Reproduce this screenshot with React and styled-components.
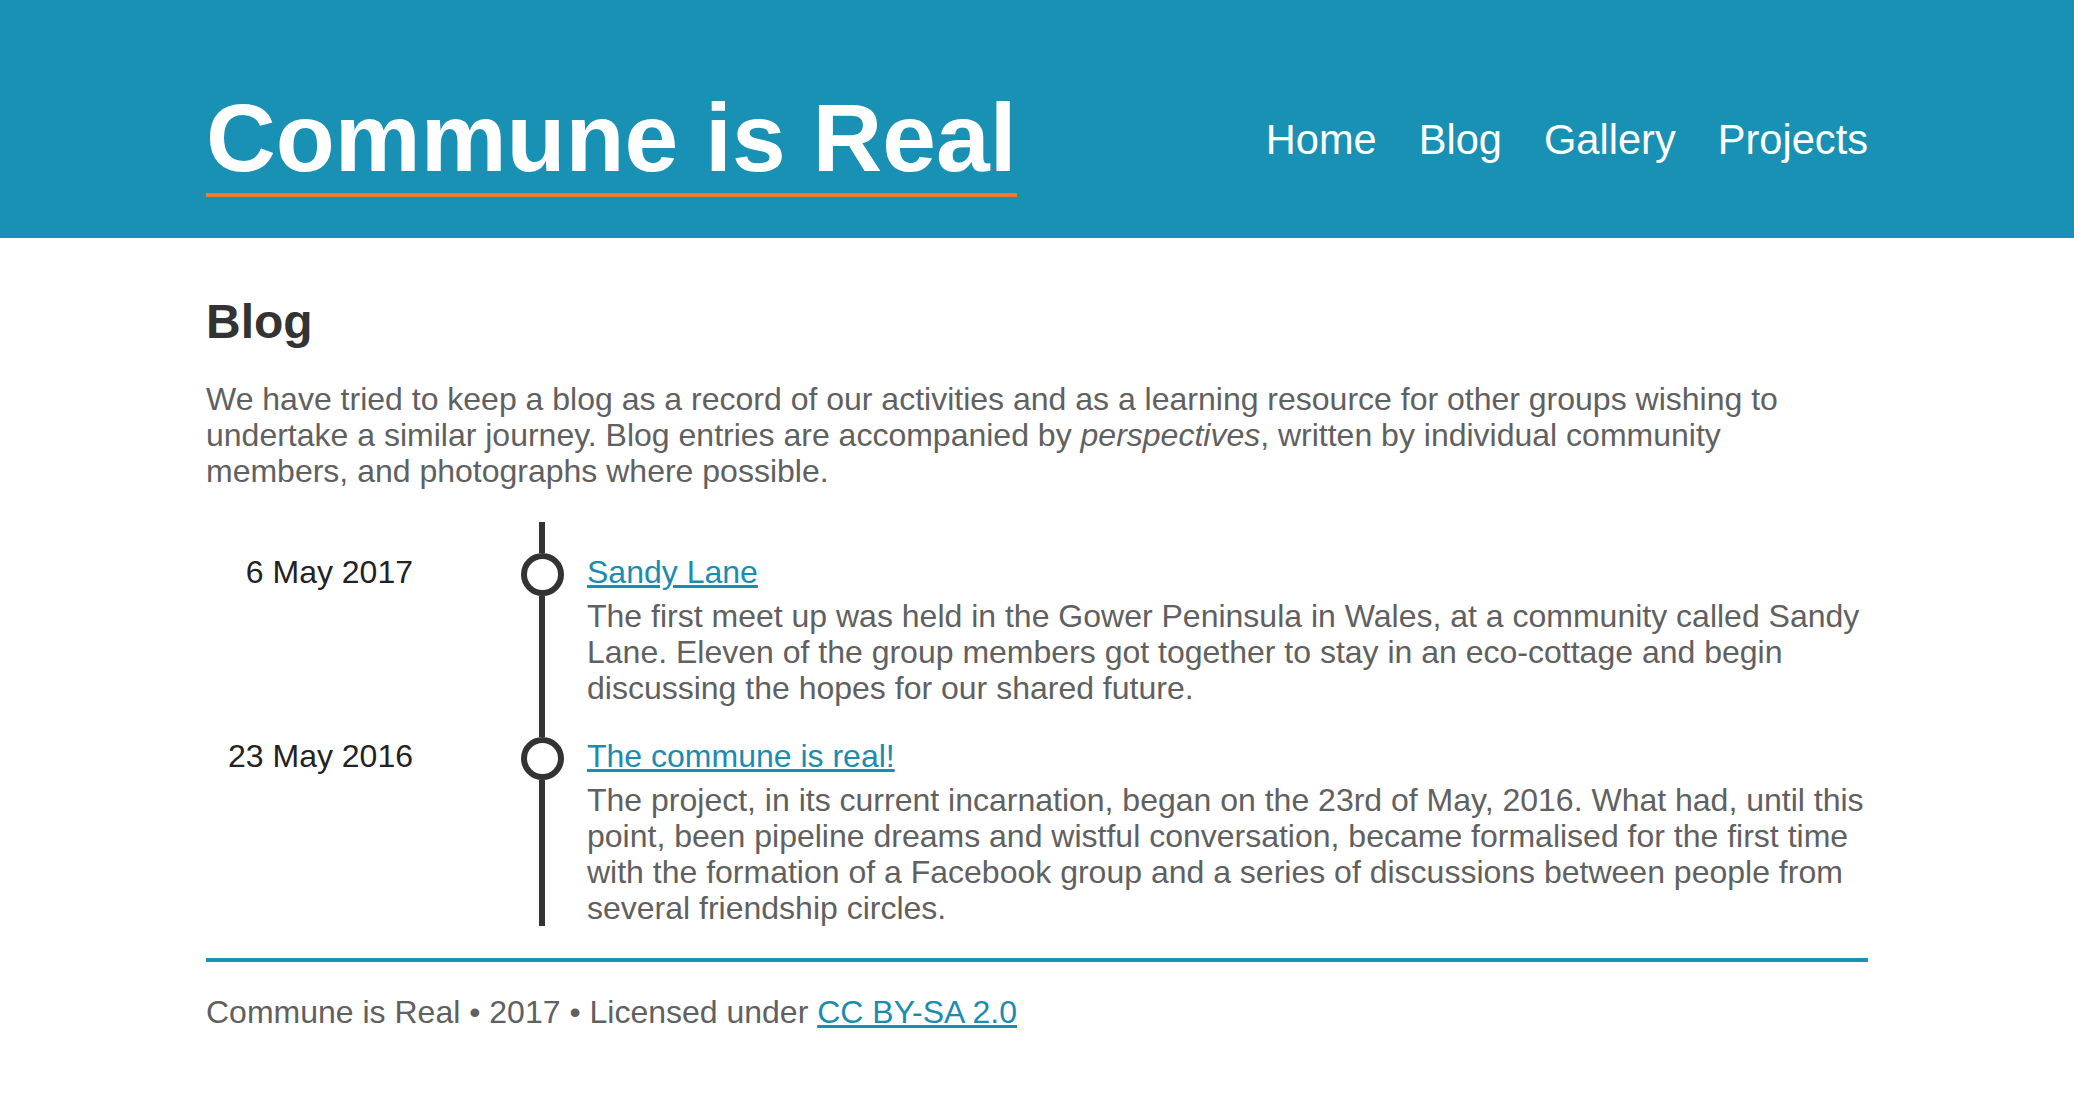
import React from 'react';
import styled, { createGlobalStyle } from 'styled-components';

const entries = [
  {
    date: '6 May 2017',
    title: 'Sandy Lane',
    text: 'The first meet up was held in the Gower Peninsula in Wales, at a community called Sandy Lane. Eleven of the group members got together to stay in an eco-cottage and begin discussing the hopes for our shared future.',
  },
  {
    date: '23 May 2016',
    title: 'The commune is real!',
    text: 'The project, in its current incarnation, began on the 23rd of May, 2016. What had, until this point, been pipeline dreams and wistful conversation, became formalised for the first time with the formation of a Facebook group and a series of discussions between people from several friendship circles.',
  },
];

export default function App() {
  return (
    <>
      <GlobalStyle />
      <Header>
        <Container>
          <SiteTitle href="#">Commune is Real</SiteTitle>
          <Nav>
            <NavLink href="#">Home</NavLink>
            <NavLink href="#">Blog</NavLink>
            <NavLink href="#">Gallery</NavLink>
            <NavLink href="#">Projects</NavLink>
          </Nav>
        </Container>
      </Header>
      <Main>
        <PageTitle>Blog</PageTitle>
        <Intro>
          We have tried to keep a blog as a record of our activities and as a learning resource for
          other groups wishing to undertake a similar journey. Blog entries are accompanied by{' '}
          <em>perspectives</em>, written by individual community members, and photographs where
          possible.
        </Intro>
        <Timeline>
          {entries.map((entry) => (
            <Entry key={entry.title}>
              <EntryDate>{entry.date}</EntryDate>
              <Rail>
                <RailLine $top />
                <RailDot />
                <RailLine />
              </Rail>
              <EntryBody>
                <EntryTitle href="#">{entry.title}</EntryTitle>
                <EntryText>{entry.text}</EntryText>
              </EntryBody>
            </Entry>
          ))}
        </Timeline>
      </Main>
      <Footer>
        Commune is Real • 2017 • Licensed under <FooterLink href="#">CC BY-SA 2.0</FooterLink>
      </Footer>
    </>
  );
}

const GlobalStyle = createGlobalStyle`
  body {
    margin: 0;
    background: #fff;
    font-family: "Liberation Sans", Helvetica, Arial, sans-serif;
    font-size: 32px;
    line-height: 36px;
    color: #606060;
  }
`;

const Header = styled.header`
  background-color: #1891b4;
  padding: 83px 0 41px;
`;

const Container = styled.div`
  width: 1662px;
  margin: 0 auto;
  display: flex;
  justify-content: space-between;
  align-items: center;
`;

const SiteTitle = styled.a`
  display: inline-block;
  font-size: 96.6px;
  font-weight: 700;
  line-height: 110px;
  color: #fff;
  text-decoration: none;
  border-bottom: 4px solid #f07b2b;
`;

const Nav = styled.nav`
  display: flex;
  gap: 42px;
`;

const NavLink = styled.a`
  font-size: 41.6px;
  line-height: 48px;
  color: #fff;
  text-decoration: none;
`;

const Main = styled.main`
  width: 1662px;
  margin: 0 auto;
`;

const PageTitle = styled.h2`
  margin: 56px 0 32px;
  font-size: 48px;
  line-height: 55px;
  font-weight: 700;
  color: #333;
`;

const Intro = styled.p`
  margin: 0 0 33px;
`;

const Timeline = styled.div`
  display: flex;
  flex-direction: column;
`;

const Entry = styled.div`
  display: flex;
  align-items: stretch;
`;

const EntryDate = styled.div`
  width: 207px;
  flex-shrink: 0;
  padding-top: 32px;
  text-align: right;
  color: #222;
`;

const Rail = styled.div`
  width: 42px;
  flex-shrink: 0;
  margin: 0 24px 0 108px;
  display: flex;
  flex-direction: column;
  align-items: center;
`;

const RailLine = styled.div`
  width: 6px;
  background: #333;
  flex: ${(p) => (p.$top ? '0 0 31px' : '1 1 auto')};
`;

const RailDot = styled.div`
  width: 43px;
  height: 43px;
  box-sizing: border-box;
  border: 6px solid #333;
  border-radius: 50%;
  background: #fff;
  flex-shrink: 0;
`;

const EntryBody = styled.div`
  flex: 1;
  padding-top: 32px;
`;

const EntryTitle = styled.a`
  display: block;
  margin-bottom: 8px;
  color: #1a8cae;
  text-decoration: underline;
`;

const EntryText = styled.p`
  margin: 0;
`;

const Footer = styled.footer`
  width: 1662px;
  margin: 32px auto 0;
  padding: 32px 0 40px;
  border-top: 4px solid #1891b4;
`;

const FooterLink = styled.a`
  color: #1a8cae;
  text-decoration: underline;
`;
